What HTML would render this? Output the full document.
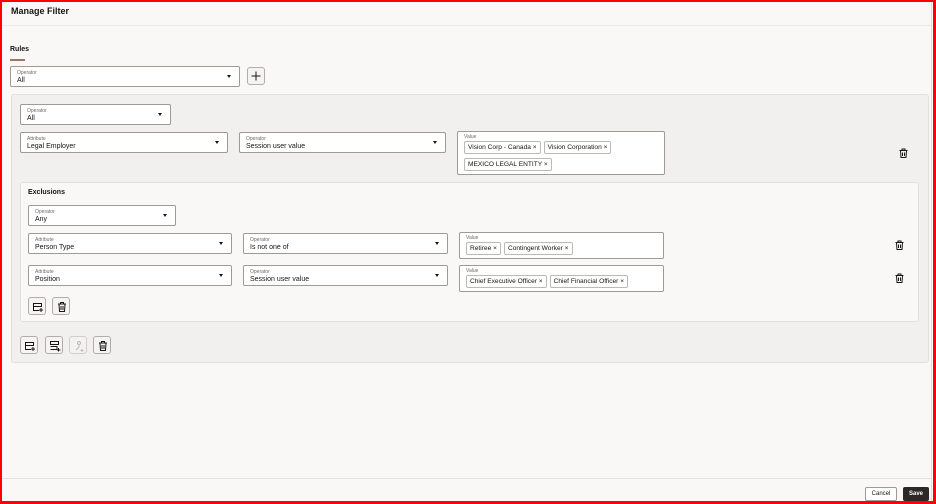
<!DOCTYPE html>
<html><head><style>
*{box-sizing:border-box;margin:0;padding:0}
body{width:936px;height:504px;overflow:hidden;background:#f9f8f6;font-family:"Liberation Sans",sans-serif;color:#161513;position:relative}
.frame{position:absolute;left:0;top:0;width:936px;height:504px;border:2px solid #f00;border-right-width:3px;border-bottom-width:3px;z-index:10;pointer-events:none}
.abs{position:absolute}
.sel{position:absolute;background:#fff;border:1px solid #9e9a96;border-radius:2px}
.sel .l{position:absolute;left:6px;top:3px;font-size:5px;color:#6f6c69}
.sel .v{position:absolute;left:6px;top:10px;font-size:7px;color:#161513}
.sel .a{position:absolute;right:8px;top:8px;width:0;height:0;border-left:2.5px solid transparent;border-right:2.5px solid transparent;border-top:3px solid #161513}
.chips{position:absolute;display:flex;gap:3px}
.chip{height:13px;border:1px solid #bdbab6;border-radius:2px;font-size:6.6px;line-height:11px;padding:0 3px;background:#fff;white-space:nowrap}
.btn{position:absolute;width:18px;height:18px;border:1px solid #b0ada9;border-radius:3px;background:#f5f4f2}
.btn svg{position:absolute;left:3px;top:3px}
.trash{position:absolute}
</style></head><body>
<div class="frame"></div>
<div class="abs" style="left:2px;top:2px;width:930px;height:24px;background:#f9f8f6;border-bottom:1px solid #eceae7"></div>
<div class="abs" style="left:11px;top:6px;font-size:9px;font-weight:bold">Manage Filter</div>
<div class="abs" style="left:931px;top:2px;width:1px;height:500px;background:#e0deda"></div>
<div class="abs" style="left:10px;top:46px;font-size:7px;font-weight:bold">Rules</div>
<div class="abs" style="left:10px;top:59px;width:15px;height:1.5px;background:#a07565"></div>

<div class="sel" style="left:10px;top:66px;width:230px;height:21px"><div class="l">Operator</div><div class="v">All</div><div class="a"></div></div>
<div class="btn" style="left:247px;top:67px"><svg width="10" height="10"><path d="M5 0.5V9.5M0.5 5H9.5" stroke="#161513" stroke-width="1"/></svg></div>

<div class="abs" style="left:11px;top:94px;width:918px;height:269px;background:#f1f0ee;border:1px solid #e2e0dc;border-radius:3px"></div>
<div class="sel" style="left:20px;top:104px;width:151px;height:21px"><div class="l">Operator</div><div class="v">All</div><div class="a"></div></div>
<div class="sel" style="left:20px;top:132px;width:208px;height:21px"><div class="l">Attribute</div><div class="v">Legal Employer</div><div class="a"></div></div>
<div class="sel" style="left:239px;top:132px;width:207px;height:21px"><div class="l">Operator</div><div class="v">Session user value</div><div class="a"></div></div>
<div class="sel" style="left:457px;top:131px;width:208px;height:44px"><div class="l" style="top:2px">Value</div></div>
<div class="chips" style="left:464px;top:141px"><div class="chip">Vision Corp - Canada ×</div><div class="chip">Vision Corporation ×</div></div>
<div class="chips" style="left:464px;top:158px"><div class="chip">MEXICO LEGAL ENTITY ×</div></div>

<div class="abs" style="left:20px;top:182px;width:899px;height:140px;background:#f9f8f6;border:1px solid #e2e0dc;border-radius:3px"></div>
<div class="abs" style="left:28px;top:189px;font-size:7px;font-weight:bold">Exclusions</div>
<div class="sel" style="left:28px;top:205px;width:148px;height:21px"><div class="l">Operator</div><div class="v">Any</div><div class="a"></div></div>
<div class="sel" style="left:28px;top:233px;width:204px;height:21px"><div class="l">Attribute</div><div class="v">Person Type</div><div class="a"></div></div>
<div class="sel" style="left:243px;top:233px;width:205px;height:21px"><div class="l">Operator</div><div class="v">Is not one of</div><div class="a"></div></div>
<div class="sel" style="left:459px;top:232px;width:205px;height:27px"><div class="l" style="top:2px">Value</div></div>
<div class="chips" style="left:466px;top:242px"><div class="chip">Retiree ×</div><div class="chip">Contingent Worker ×</div></div>
<div class="sel" style="left:28px;top:265px;width:204px;height:21px"><div class="l">Attribute</div><div class="v">Position</div><div class="a"></div></div>
<div class="sel" style="left:243px;top:265px;width:205px;height:21px"><div class="l">Operator</div><div class="v">Session user value</div><div class="a"></div></div>
<div class="sel" style="left:459px;top:265px;width:205px;height:27px"><div class="l" style="top:2px">Value</div></div>
<div class="chips" style="left:466px;top:275px"><div class="chip">Chief Executive Officer ×</div><div class="chip">Chief Financial Officer ×</div></div>

<svg class="trash" style="left:899px;top:148px" width="9" height="10"><path d="M0.5 2.5H8.5M3 2.5V1H6V2.5M1.5 2.5L2 9.5H7L7.5 2.5M3.5 4.5V8M5.5 4.5V8" stroke="#161513" fill="none" stroke-width="1"/></svg>
<svg class="trash" style="left:895px;top:240px" width="9" height="10"><path d="M0.5 2.5H8.5M3 2.5V1H6V2.5M1.5 2.5L2 9.5H7L7.5 2.5M3.5 4.5V8M5.5 4.5V8" stroke="#161513" fill="none" stroke-width="1"/></svg>
<svg class="trash" style="left:895px;top:273px" width="9" height="10"><path d="M0.5 2.5H8.5M3 2.5V1H6V2.5M1.5 2.5L2 9.5H7L7.5 2.5M3.5 4.5V8M5.5 4.5V8" stroke="#161513" fill="none" stroke-width="1"/></svg>

<div class="btn" style="left:28px;top:297px"><svg width="12" height="12"><path d="M1.5 2.5H9.5V5.5H1.5ZM1.5 5.5V9.5H7M9 7V11M7 9H11" stroke="#161513" fill="none"/></svg></div>
<div class="btn" style="left:52px;top:297px"><svg width="12" height="12"><path d="M2 3H10M4.5 3V1.5H7.5V3M3 3L3.5 10.5H8.5L9 3M5 5V9M7 5V9" stroke="#161513" fill="none"/></svg></div>

<div class="btn" style="left:20px;top:336px"><svg width="12" height="12"><path d="M1.5 2.5H9.5V5.5H1.5ZM1.5 5.5V9.5H7M9 7V11M7 9H11" stroke="#161513" fill="none"/></svg></div>
<div class="btn" style="left:45px;top:336px"><svg width="12" height="12"><path d="M1.5 1.5H9.5V4.5H1.5ZM1.5 6.5H8V9.5H1.5M9.5 8V11.5M8 10H11.5" stroke="#161513" fill="none"/></svg></div>
<div class="btn" style="left:69px;top:336px;opacity:.5"><svg width="12" height="12"><circle cx="6" cy="3" r="1.5" stroke="#888" fill="none"/><path d="M6 4.5V7M3 10L6 7M9 9V12M7.5 10.5H10.5" stroke="#888" fill="none"/></svg></div>
<div class="btn" style="left:93px;top:336px"><svg width="12" height="12"><path d="M2 3H10M4.5 3V1.5H7.5V3M3 3L3.5 10.5H8.5L9 3M5 5V9M7 5V9" stroke="#161513" fill="none"/></svg></div>

<div class="abs" style="left:2px;top:478px;width:929px;height:1px;background:#e4e2de"></div>
<div class="abs" style="left:865px;top:487px;width:32px;height:14px;border:1px solid #9e9a96;border-radius:2px;background:#fff;font-size:6px;line-height:12px;text-align:center">Cancel</div>
<div class="abs" style="left:903px;top:487px;width:26px;height:14px;border-radius:2px;background:#2b2826;color:#fff;font-size:6px;font-weight:bold;line-height:14px;text-align:center">Save</div>
</body></html>
